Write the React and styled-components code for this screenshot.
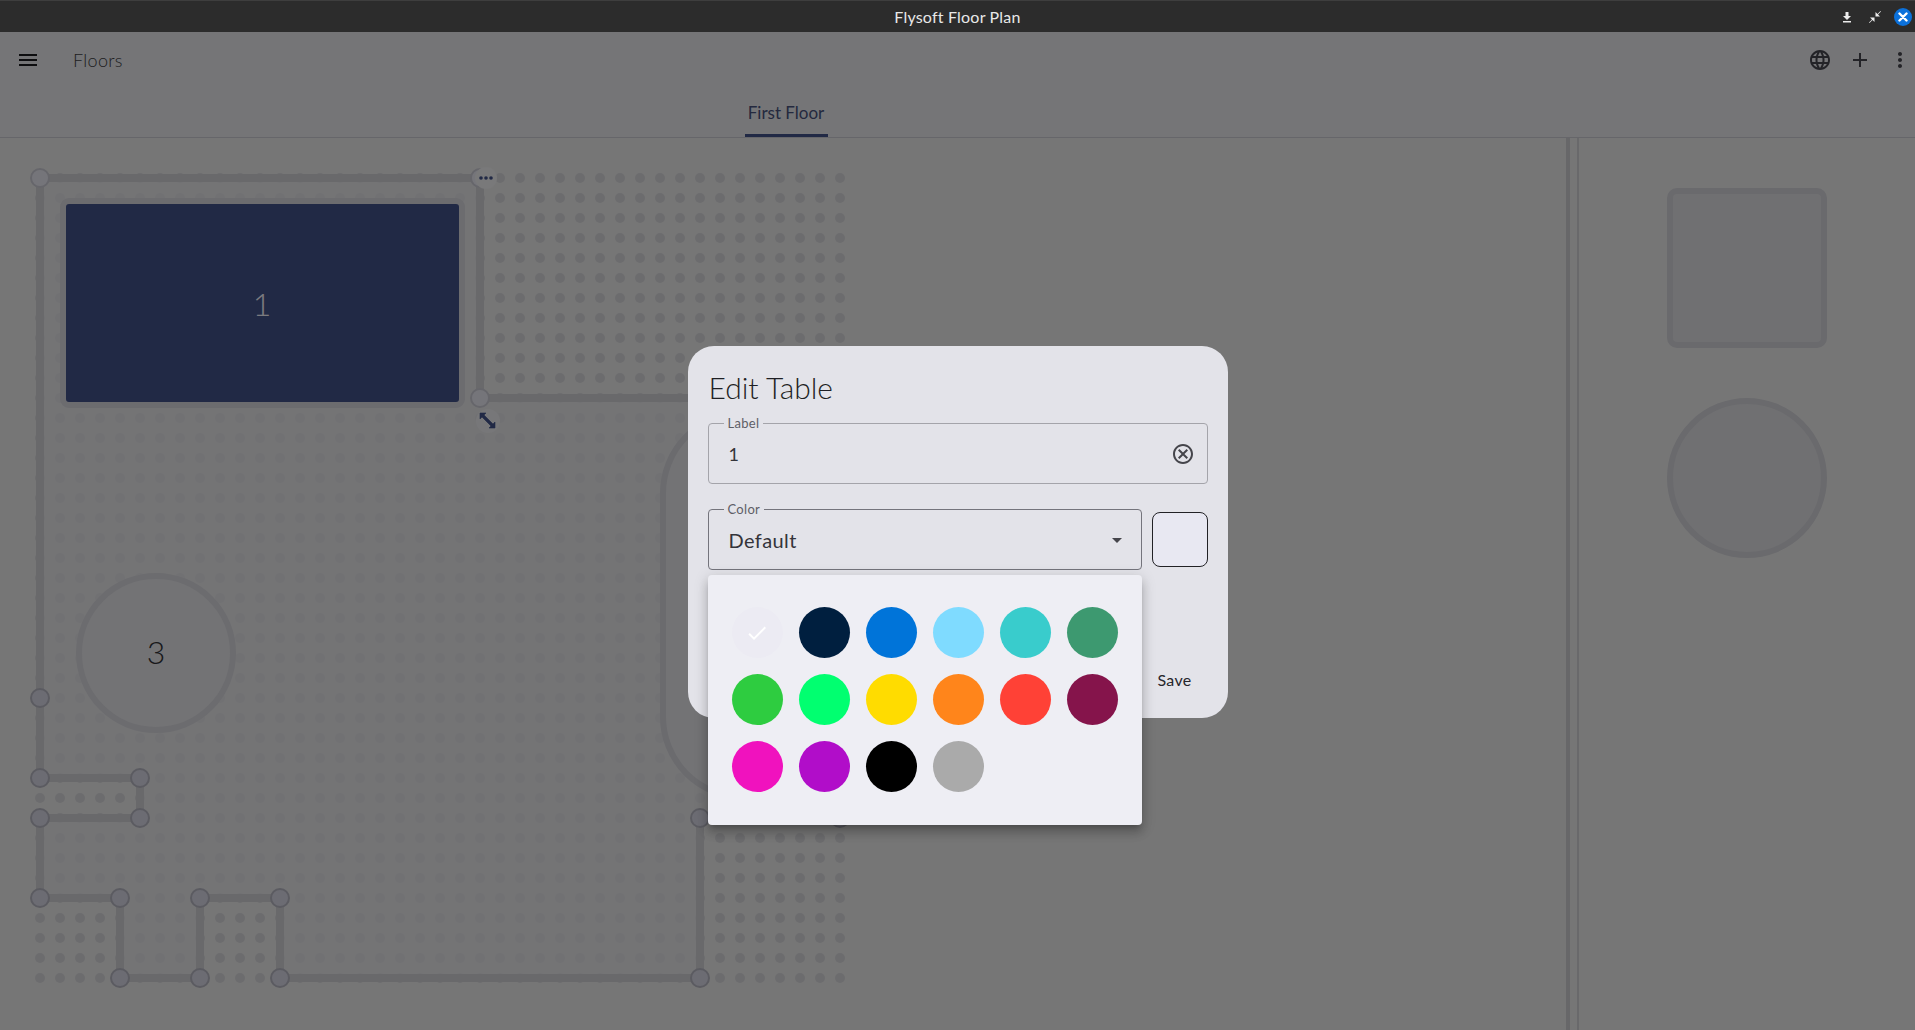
import React from "react";
import styled, { createGlobalStyle } from "styled-components";
import { MdMenu, MdAdd, MdMoreVert, MdLanguage, MdOutlineCancel, MdArrowDropDown, MdCheck } from "react-icons/md";

const FONT = `"Lato", "Open Sans", "Noto Sans", sans-serif`;

const Global = createGlobalStyle`
  html, body { margin: 0; padding: 0; height: 100%; overflow: hidden; background: #ececec; }
  * { box-sizing: border-box; }
  body { font-family: ${FONT}; }
`;

const Shell = styled.div`
  width: 1915px; height: 1030px; display: flex; flex-direction: column; overflow: hidden;
`;
const TitleBar = styled.header`
  height: 32px; flex: none; background: #2c2c2c; border-top: 1px solid #3e3e3e;
  display: grid; grid-template-columns: 1fr auto 1fr; align-items: center;
`;
const WindowTitle = styled.div`
  grid-column: 2; color: #e8e8e8; font-size: 16px; font-weight: 400; letter-spacing: .2px;
`;
const WindowControls = styled.div`
  grid-column: 3; justify-self: end; display: flex; align-items: center; gap: 10px; padding-right: 3px;
`;
const WinButton = styled.span`
  width: 18px; height: 18px; border-radius: 50%; display: flex; align-items: center; justify-content: center;
  background: ${p => (p.$primary ? "#0b71db" : "transparent")};
`;
const Body = styled.div`
  position: relative; flex: 1; display: flex; flex-direction: column; background: #ededed; min-height: 0;
`;
const AppHeader = styled.div`
  flex: none; height: 106px; background: #eaeaee; border-bottom: 1px solid #cdcdd4;
`;
const Toolbar = styled.div`
  height: 56px; display: flex; align-items: center; padding-left: 8px;
`;
const IconButton = styled.button`
  width: ${p => p.$w || 40}px; height: 40px; border: 0; background: none; padding: 0; color: ${p => p.$color || "#46464e"};
  display: flex; align-items: center; justify-content: center;
`;
const PageTitle = styled.div`
  margin-left: 25px; font-size: 18px; font-weight: 300; color: #404044; flex: 1; letter-spacing: .3px;
`;
const ToolActions = styled.div`
  display: flex; gap: 10px;
`;
const TabRow = styled.div`
  height: 49px; width: 1572px; display: flex; justify-content: center;
`;
const Tab = styled.div`
  width: 83px; height: 49px; border-bottom: 3px solid #42528a; color: #48527e; font-size: 17px; text-align: center;
  line-height: 50px; white-space: nowrap;
`;
const Workspace = styled.div`
  flex: 1; display: flex; min-height: 0;
`;
const CanvasPane = styled.div`
  width: 1566px; flex: none; overflow: hidden;
`;
const PlanSvg = styled.svg`
  display: block; width: 1566px; height: 892px;
`;
const PaneDivider = styled.div`
  width: 4px; flex: none; background: #cfcfd2;
`;
const ThinDivider = styled.div`
  width: 2px; flex: none; margin-left: 7px; background: #d2d2d6;
`;
const Palette = styled.aside`
  flex: 1; display: flex; flex-direction: column; align-items: center; gap: 50px; padding-top: 50px;
`;
const PaletteShape = styled.div`
  width: 160px; height: 160px; background: #e0e0e4; border: 6px solid #d4d4da;
  border-radius: ${p => (p.$round ? "50%" : "10px")};
`;
const Backdrop = styled.div`
  position: absolute; inset: 0; background: rgba(0, 0, 0, .5); display: flex; align-items: center; justify-content: center;
  padding-top: 2px;
`;
const Modal = styled.div`
  width: 540px; height: 372px; background: #e3e3e9; border-radius: 26px; padding: 24px 20px 20px;
  display: flex; flex-direction: column;
`;
const ModalTitle = styled.h2`
  margin: 0 0 19px; font-size: 30px; line-height: 34px; font-weight: 300; color: #1e1f24; padding-left: 1px;
`;
const Field = styled.div`
  position: relative; height: 61px; flex: ${p => (p.$grow ? 1 : "none")}; display: flex; align-items: center; padding: 0 12px 0 20px;
  border: 1px solid ${p => (p.$active ? "#74747c" : "#a4a4aa")}; border-radius: 4px; color: #34343a;
  font-size: ${p => (p.$big ? 20 : 18)}px; letter-spacing: .4px;
`;
const FieldLabel = styled.span`
  position: absolute; left: 15px; top: -9px; padding: 0 4px; background: #e3e3e9; font-size: 13px; line-height: 16px;
  color: #5e5e66; letter-spacing: .3px;
`;
const FieldValue = styled.span`
  flex: 1;
`;
const ColorRow = styled.div`
  display: flex; align-items: center; gap: 10px; margin-top: 25px; position: relative;
`;
const Swatch = styled.div`
  width: 56px; height: 55px; flex: none; background: #e8e8f2; border: 1px solid #222226; border-radius: 8px;
`;
const ColorMenu = styled.div`
  position: absolute; left: 0; top: 66px; width: 434px; height: 250px; padding: 32px 24px; background: #eeeef4; border-radius: 4px;
  display: grid; grid-template-columns: repeat(6, 51px); grid-auto-rows: 51px; gap: 16px;
  box-shadow: 0 5px 5px -3px rgba(0,0,0,.2), 0 8px 10px 1px rgba(0,0,0,.14), 0 3px 14px 2px rgba(0,0,0,.12);
  z-index: 2;
`;
const ColorDot = styled.div`
  width: 51px; height: 51px; border-radius: 50%; background: ${p => p.$c}; color: #fff;
  display: flex; align-items: center; justify-content: center;
`;
const Actions = styled.div`
  margin-top: auto; display: flex; justify-content: flex-end;
`;
const TextButton = styled.button`
  height: 38px; padding: 0 16px; border: 0; background: none; font: 400 16px ${FONT}; color: #26262c; letter-spacing: .3px;
`;

const SPACING = 20;
const dots = [];
for (let x = 40; x <= 840; x += SPACING) for (let y = 178; y <= 978; y += SPACING) dots.push([x, y]);

const ROOM = "40,178 480,178 480,398 840,398 840,818 700,818 700,978 280,978 280,898 200,898 200,978 120,978 120,898 40,898 40,818 140,818 140,778 40,778";
const LIGHT_NODES = [[40, 178], [480, 398]];
const NODES = [[40, 698], [40, 778], [140, 778], [40, 818], [140, 818], [40, 898], [120, 898], [200, 898], [280, 898], [120, 978], [200, 978], [280, 978], [700, 978], [700, 818], [840, 818]];
const COLORS = ["#ecebf3", "#001f3f", "#0074d9", "#7fdbff", "#39cccc", "#3d9970", "#2ecc40", "#01ff70", "#ffdc00", "#ff851b", "#ff4136", "#85144b", "#f012be", "#b10dc9", "#000000", "#aaaaaa"];

const FloorPlan = () => (
  <PlanSvg viewBox="0 138 1566 892">
    <g fill="#d9d9dd">
      {dots.map(([x, y]) => <circle key={`${x}-${y}`} cx={x} cy={y} r="5" />)}
    </g>
    <polygon points={ROOM} fill="#e6e6ea" fillOpacity=".72" />
    <rect x="663" y="413" width="170" height="384" rx="80" fill="#e6e6ea" stroke="#d6d6dc" strokeWidth="6" />
    <circle cx="156" cy="653" r="77" fill="#e6e6ea" stroke="#d8d8de" strokeWidth="6" />
    <text x="156" y="664" textAnchor="middle" fontFamily={FONT} fontSize="32" fontWeight="300" fill="#333338">3</text>
    <polygon points={ROOM} fill="none" stroke="#d2d2d6" strokeWidth="8" />
    <rect x="63" y="201" width="399" height="204" rx="6" fill="#42528a" stroke="#d8d8de" strokeWidth="6" />
    <text x="262" y="316" textAnchor="middle" fontFamily={FONT} fontSize="32" fontWeight="300" fill="#f6f6ff">1</text>
    {LIGHT_NODES.map(([x, y]) => <circle key={`${x}-${y}`} cx={x} cy={y} r="9" fill="#ebebf5" stroke="#ccccd6" strokeWidth="2" />)}
    {NODES.map(([x, y]) => <circle key={`${x}-${y}`} cx={x} cy={y} r="9" fill="#d8d8e6" stroke="#b6b6c2" strokeWidth="2" />)}
    <circle cx="480" cy="178" r="9" fill="#ebebf5" stroke="#ccccd6" strokeWidth="2" />
    <circle cx="486" cy="178" r="11" fill="#f2f2f4" />
    <g fill="#42528a"><circle cx="481" cy="178" r="1.8" /><circle cx="486" cy="178" r="1.8" /><circle cx="491" cy="178" r="1.8" /></g>
    <circle cx="488" cy="421" r="12" fill="#efeff2" />
    <path d="M480 413h6l-2 2 9 9 2-2v6h-6l2-2-9-9-2 2z" fill="#42528a" stroke="#42528a" strokeWidth=".6" strokeLinejoin="round" />
  </PlanSvg>
);

export default function App() {
  return (
    <Shell>
      <Global />
      <TitleBar>
        <WindowTitle>Flysoft Floor Plan</WindowTitle>
        <WindowControls>
          <WinButton>
            <svg width="12" height="12" viewBox="0 0 12 12" fill="#ececec"><path d="M4.5 1h3v4H10L6 9 2 5h2.500zM2 10h8v1.500H2z" /></svg>
          </WinButton>
          <WinButton>
            <svg width="14" height="14" viewBox="0 0 14 14" fill="#ececec"><path d="M12.500 1 13 1.500 10 4.500 12 6.500H7.500V2l2 2zM1.500 13 1 12.500 4 9.500 2 7.500h4.500V12l-2-2z" /></svg>
          </WinButton>
          <WinButton $primary>
            <svg width="10" height="10" viewBox="0 0 10 10" stroke="#fff" strokeWidth="2.400" strokeLinecap="round"><path d="M1.500 1.500l7 7M8.500 1.500l-7 7" /></svg>
          </WinButton>
        </WindowControls>
      </TitleBar>
      <Body>
        <AppHeader>
          <Toolbar>
            <IconButton $color="#1c1c20"><MdMenu size={24} /></IconButton>
            <PageTitle>Floors</PageTitle>
            <ToolActions>
              <IconButton $w={30}><MdLanguage size={24} /></IconButton>
              <IconButton $w={30}><MdAdd size={24} /></IconButton>
              <IconButton $w={30}><MdMoreVert size={24} /></IconButton>
            </ToolActions>
          </Toolbar>
          <TabRow><Tab>First Floor</Tab></TabRow>
        </AppHeader>
        <Workspace>
          <CanvasPane><FloorPlan /></CanvasPane>
          <PaneDivider />
          <ThinDivider />
          <Palette>
            <PaletteShape />
            <PaletteShape $round />
          </Palette>
        </Workspace>
        <Backdrop>
          <Modal>
            <ModalTitle>Edit Table</ModalTitle>
            <Field>
              <FieldLabel>Label</FieldLabel>
              <FieldValue>1</FieldValue>
              <MdOutlineCancel size={24} color="#45454b" />
            </Field>
            <ColorRow>
              <Field $grow $active $big>
                <FieldLabel>Color</FieldLabel>
                <FieldValue>Default</FieldValue>
                <MdArrowDropDown size={24} color="#45454b" />
              </Field>
              <Swatch />
              <ColorMenu>
                {COLORS.map((c, i) => (
                  <ColorDot key={c} $c={c}>{i === 0 && <MdCheck size={24} />}</ColorDot>
                ))}
              </ColorMenu>
            </ColorRow>
            <Actions><TextButton>Save</TextButton></Actions>
          </Modal>
        </Backdrop>
      </Body>
    </Shell>
  );
}
